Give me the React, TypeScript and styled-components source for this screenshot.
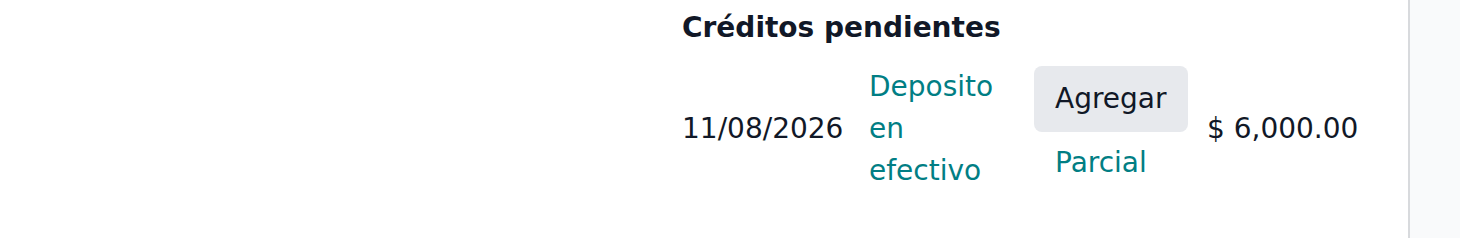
import React from "react"
import styled, { createGlobalStyle } from "styled-components"

const GlobalStyle = createGlobalStyle`
	html, body {
		margin: 0;
		padding: 0;
		background: #ffffff;
	}
	body {
		font-family: "DejaVu Sans", "Liberation Sans", sans-serif;
		color: #111827;
	}
`

const SPage = styled.div`
	display: flex;
	width: 1460px;
	height: 238px;
	overflow: hidden;
`

const SMain = styled.div`
	flex: 1;
	padding: 0 0 0 682px;
	box-sizing: border-box;
`

const SSide = styled.div`
	width: 50px;
	border-left: 2px solid #d8dadd;
	background-color: #f9fafb;
`

const STitle = styled.div`
	font-size: 28px;
	font-weight: bold;
	line-height: 42px;
	margin: 7px 0 17px 0;
	color: #111827;
`

const SRow = styled.div`
	display: grid;
	grid-template-columns: 187px 165px 173px auto;
	align-items: center;
	font-size: 28px;
	line-height: 42px;
`

const SCell = styled.div<{ $link?: boolean; $wrap?: number }>`
	color: ${(p) => (p.$link ? "#017e84" : "#111827")};
	max-width: ${(p) => (p.$wrap ? `${p.$wrap}px` : "none")};
	white-space: ${(p) => (p.$wrap ? "normal" : "nowrap")};
`

const SActions = styled.div`
	display: flex;
	flex-direction: column;
	align-items: flex-start;
`

const SButton = styled.button<{ $plain?: boolean }>`
	font-family: inherit;
	font-size: 28px;
	line-height: 42px;
	border: none;
	border-radius: 8px;
	cursor: pointer;
	width: 154px;
	text-align: left;
	padding: ${(p) => (p.$plain ? "10px 21px 8px" : "12px 21px")};
	color: ${(p) => (p.$plain ? "#017e84" : "#111827")};
	background-color: ${(p) => (p.$plain ? "transparent" : "#e7e9ed")};
`

export default function App() {
	return (
		<SPage>
			<GlobalStyle />
			<SMain>
				<STitle>Créditos pendientes</STitle>
				<SRow>
					<SCell>11/08/2026</SCell>
					<SCell $link $wrap={138}>Deposito en efectivo</SCell>
					<SActions>
						<SButton>Agregar</SButton>
						<SButton $plain>Parcial</SButton>
					</SActions>
					<SCell>$ 6,000.00</SCell>
				</SRow>
			</SMain>
			<SSide />
		</SPage>
	)
}
